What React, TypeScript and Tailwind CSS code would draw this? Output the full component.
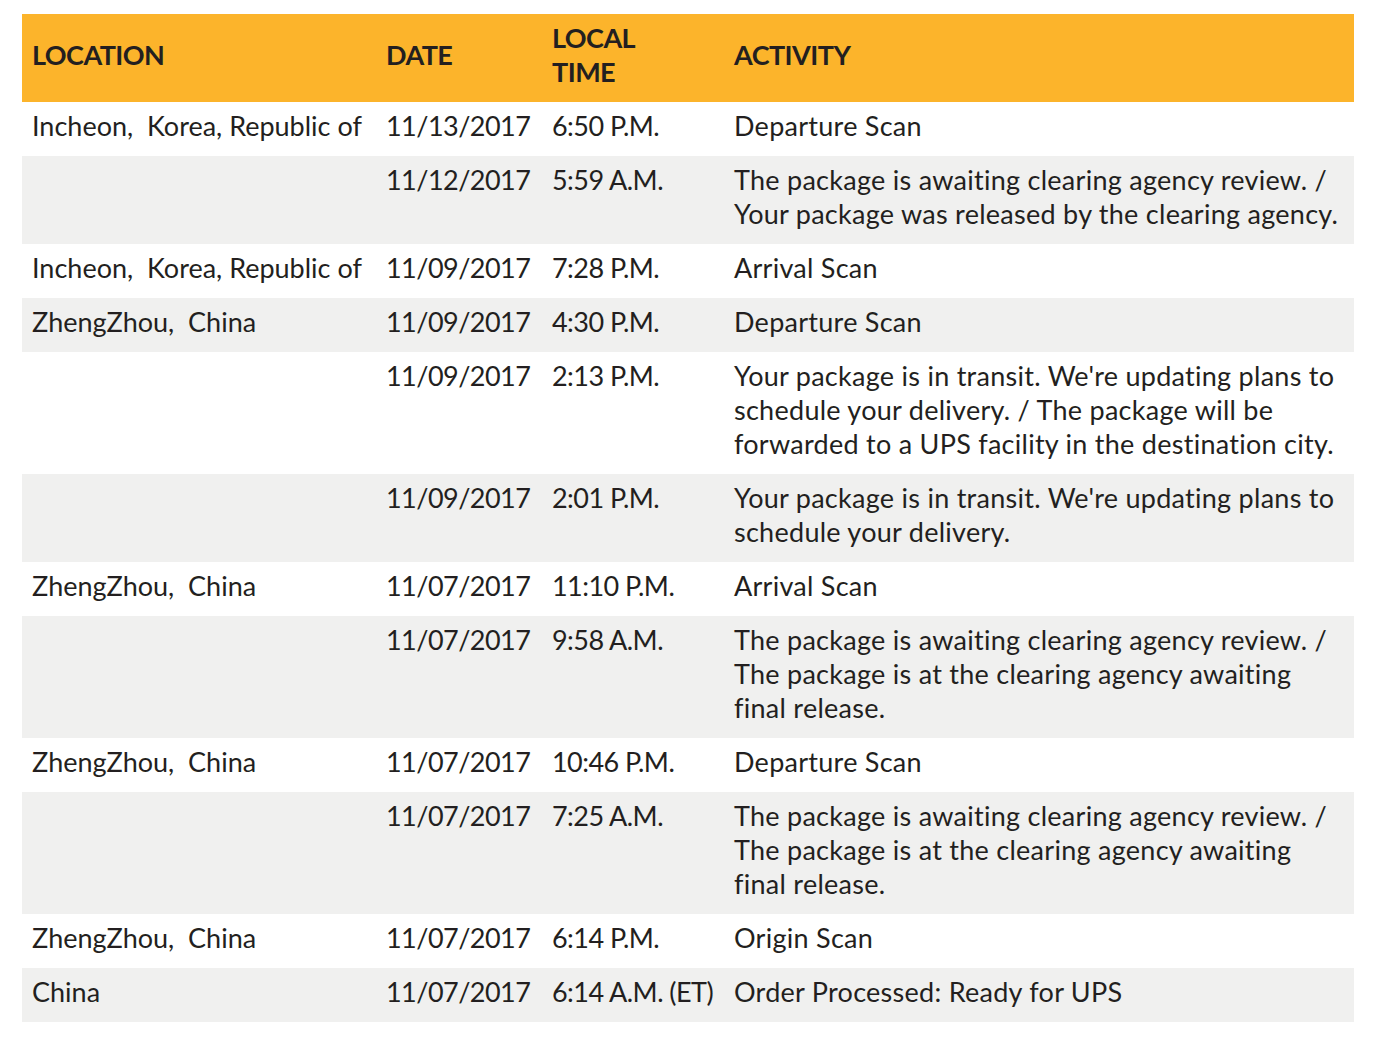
const ROWS: { loc: string; date: string; time: string; activity: string[] }[] = [
  { loc: "Incheon,  Korea, Republic of", date: "11/13/2017", time: "6:50 P.M.", activity: ["Departure Scan"] },
  {
    loc: "",
    date: "11/12/2017",
    time: "5:59 A.M.",
    activity: ["The package is awaiting clearing agency review. /", "Your package was released by the clearing agency."],
  },
  { loc: "Incheon,  Korea, Republic of", date: "11/09/2017", time: "7:28 P.M.", activity: ["Arrival Scan"] },
  { loc: "ZhengZhou,  China", date: "11/09/2017", time: "4:30 P.M.", activity: ["Departure Scan"] },
  {
    loc: "",
    date: "11/09/2017",
    time: "2:13 P.M.",
    activity: [
      "Your package is in transit. We're updating plans to",
      "schedule your delivery. / The package will be",
      "forwarded to a UPS facility in the destination city.",
    ],
  },
  {
    loc: "",
    date: "11/09/2017",
    time: "2:01 P.M.",
    activity: ["Your package is in transit. We're updating plans to", "schedule your delivery."],
  },
  { loc: "ZhengZhou,  China", date: "11/07/2017", time: "11:10 P.M.", activity: ["Arrival Scan"] },
  {
    loc: "",
    date: "11/07/2017",
    time: "9:58 A.M.",
    activity: [
      "The package is awaiting clearing agency review. /",
      "The package is at the clearing agency awaiting",
      "final release.",
    ],
  },
  { loc: "ZhengZhou,  China", date: "11/07/2017", time: "10:46 P.M.", activity: ["Departure Scan"] },
  {
    loc: "",
    date: "11/07/2017",
    time: "7:25 A.M.",
    activity: [
      "The package is awaiting clearing agency review. /",
      "The package is at the clearing agency awaiting",
      "final release.",
    ],
  },
  { loc: "ZhengZhou,  China", date: "11/07/2017", time: "6:14 P.M.", activity: ["Origin Scan"] },
  { loc: "China", date: "11/07/2017", time: "6:14 A.M. (ET)", activity: ["Order Processed: Ready for UPS"] },
];

export default function App() {
  return (
    <div className="min-h-screen bg-white pt-[14px] pl-[22px] pr-[26px] font-['Lato',sans-serif] text-[27px] leading-[34px] text-[#231f20]">
      {/* header */}
      <div className="grid grid-cols-[354px_166px_182px_1fr] bg-[#fcb42b] pt-[7px] pb-[13px] font-bold tracking-[-0.02em]">
        <div className="flex items-center px-[10px]">LOCATION</div>
        <div className="flex items-center px-[10px]">DATE</div>
        <div className="px-[10px]">
          LOCAL
          <br />
          TIME
        </div>
        <div className="flex items-center px-[10px]">ACTIVITY</div>
      </div>

      {ROWS.map((row, i) => (
        <div
          key={i}
          className={`grid grid-cols-[354px_166px_182px_1fr] pt-[7px] pb-[13px] ${i % 2 === 1 ? "bg-[#f0f0ef]" : "bg-white"}`}
        >
          <div className="whitespace-pre px-[10px]">{row.loc}</div>
          <div className="whitespace-nowrap px-[10px] tracking-[-0.02em]">{row.date}</div>
          <div className="whitespace-nowrap px-[10px] tracking-[-0.02em]">{row.time}</div>
          <div className="whitespace-nowrap px-[10px] tracking-[0.01em]">
            {row.activity.map((line, j) => (
              <div key={j}>{line}</div>
            ))}
          </div>
        </div>
      ))}
    </div>
  );
}
